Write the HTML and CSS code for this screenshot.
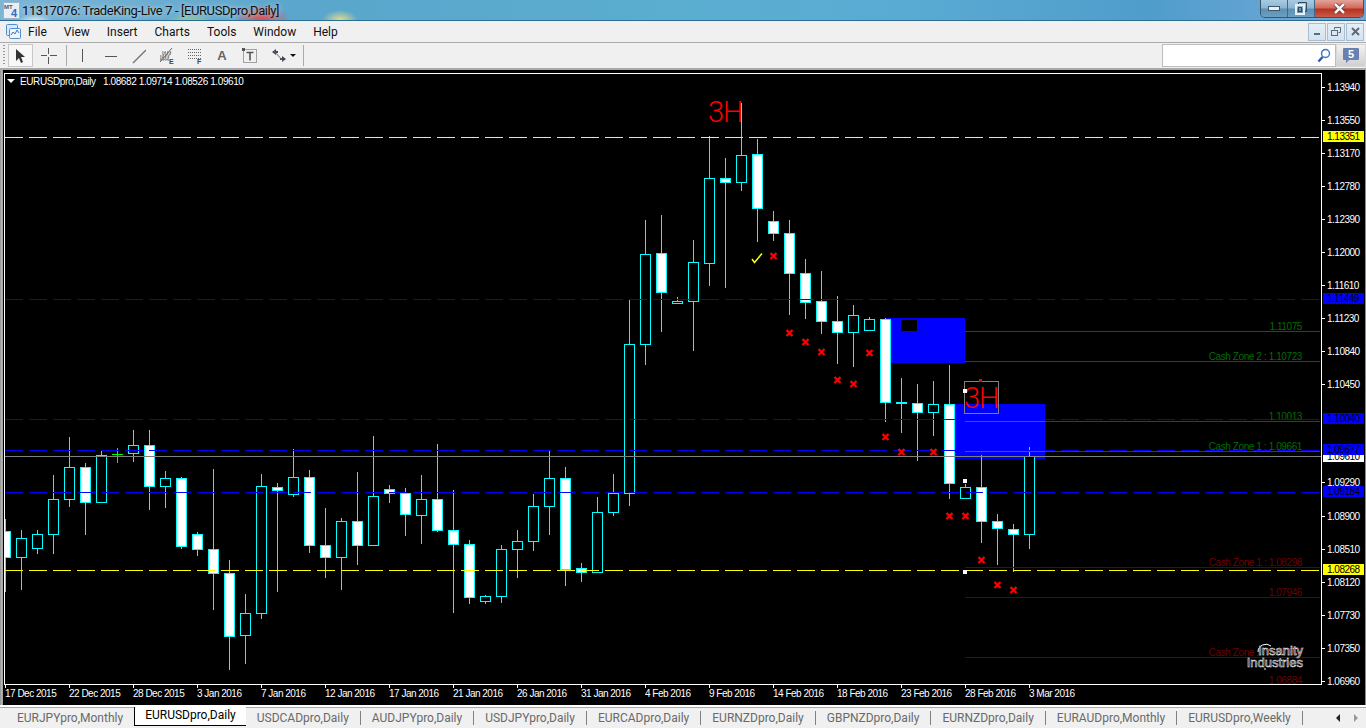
FILE: index.html
```html
<!DOCTYPE html>
<html lang="en">
<head>
<meta charset="utf-8">
<title>MetaTrader 4</title>
<link rel="stylesheet" href="styles.css">
</head>
<body>
<div class="window">
  <header class="titlebar">
    <svg class="app-icon" width="17" height="17" viewBox="0 0 17 17"><rect x="0.5" y="0.5" width="16" height="16" rx="1" fill="#e8eef4" stroke="#9fb4c8"/><text x="1" y="7" class="mt">MT</text><text x="8" y="15" class="four">4</text></svg>
    <span class="title-text">11317076: TradeKing-Live 7 - [EURUSDpro,Daily]</span>
    <div class="caption">
      <button class="cap cap-min"><svg width="12" height="5" viewBox="0 0 12 5"><rect x="0.5" y="0.5" width="11" height="4" fill="#e9eef2" stroke="#3a5870"/></svg></button>
      <button class="cap cap-max"><svg width="13" height="13" viewBox="0 0 13 13"><path d="M3.5 3.5V.5h8v9h-3" fill="none" stroke="#2c4a60"/><rect x="1" y="3" width="8" height="9" fill="none" stroke="#e9eef2" stroke-width="2"/><rect x="3.5" y="5.5" width="3" height="4" fill="none" stroke="#2c4a60"/></svg></button>
      <button class="cap cap-close"><svg width="13" height="11" viewBox="0 0 13 11"><path d="M2 1l9 9M11 1l-9 9" stroke="#4a2a2a" stroke-width="4"/><path d="M2 1l9 9M11 1l-9 9" stroke="#f4f4f4" stroke-width="2.6"/></svg></button>
    </div>
  </header>

  <nav class="menubar">
    <svg class="mdi-icon" width="17" height="17" viewBox="0 0 17 17"><rect x="1.5" y="1.5" width="11" height="11" rx="1" fill="#dbe9f6" stroke="#4f8fd0"/><rect x="4.5" y="5.5" width="11" height="10" rx="1" fill="#eef5fb" stroke="#4f8fd0"/><path d="M6 12l2-3 2 2 2-4 2 3" fill="none" stroke="#3a78b8"/></svg>
    <span class="menu-item">File</span>
    <span class="menu-item">View</span>
    <span class="menu-item">Insert</span>
    <span class="menu-item">Charts</span>
    <span class="menu-item">Tools</span>
    <span class="menu-item">Window</span>
    <span class="menu-item">Help</span>
    <div class="mdi-buttons">
      <span class="mdi-btn"><svg width="9" height="9" viewBox="0 0 9 9"><rect x="1" y="6" width="6" height="2" fill="#5a6b7c"/></svg></span>
      <span class="mdi-btn"><svg width="10" height="10" viewBox="0 0 10 10"><path d="M3.5 2.5V.5h6v5h-2" fill="none" stroke="#5a6b7c"/><rect x="0.5" y="3.5" width="6" height="5" fill="none" stroke="#5a6b7c"/></svg></span>
      <span class="mdi-btn"><svg width="9" height="9" viewBox="0 0 9 9"><path d="M1 1l7 7M8 1l-7 7" stroke="#5a6b7c" stroke-width="2"/></svg></span>
    </div>
  </nav>

  <div class="toolbar">
    <span class="grip"></span>
    <span class="tool tool-active"><svg width="14" height="16" viewBox="0 0 14 16"><path d="M2 1v12l3-3 2 5 2-1-2-5h4z" fill="#333"/></svg></span>
    <span class="tool"><svg width="16" height="16" viewBox="0 0 16 16"><path d="M0 7.500h6M9 7.500h7M7.500 0v6M7.500 9v7" stroke="#555" fill="none"/></svg></span>
    <span class="tool-sep"></span>
    <span class="tool"><svg width="16" height="16" viewBox="0 0 16 16"><path d="M8.500 1v13" stroke="#555" fill="none"/></svg></span>
    <span class="tool"><svg width="16" height="16" viewBox="0 0 16 16"><path d="M3 8.500h12" stroke="#555" fill="none"/></svg></span>
    <span class="tool"><svg width="16" height="16" viewBox="0 0 16 16"><path d="M3 15L16 2" stroke="#777" stroke-width="1.400" fill="none"/></svg></span>
    <span class="tool"><svg width="18" height="18" viewBox="0 0 18 18"><path d="M3 9h10M3 11h10M3 13h10M5 7h10M5 5h10M4 13L8 5M7 13l4-8M10 13l4-8" stroke="#666" fill="none" stroke-dasharray="1.500 1"/><path d="M3 15L15 1" stroke="#666" fill="none"/><text x="12" y="17" class="tool-letter">E</text></svg></span>
    <span class="tool"><svg width="18" height="18" viewBox="0 0 18 18"><path d="M3 2.500h13M3 5.500h13M3 8.500h13M3 11.500h13" stroke="#666" stroke-dasharray="1 1" fill="none"/><text x="12" y="17" class="tool-letter">F</text></svg></span>
    <span class="tool tool-a">A</span>
    <span class="tool"><svg width="16" height="16" viewBox="0 0 16 16"><rect x="1.500" y="1.500" width="13" height="13" fill="none" stroke="#555" stroke-dasharray="1 1"/><rect x="0" y="0" width="3" height="3" fill="#555"/><path d="M4.500 4.500h7M8 4.500v8" stroke="#555" stroke-width="1.600" fill="none"/></svg></span>
    <span class="tool"><svg width="16" height="16" viewBox="0 0 16 16"><path d="M2 4l4-3v2h2v2H6v2zM16 11l-4-3v2h-2v2h2v2z" fill="#445"/><path d="M4 3l9 10" stroke="#667" fill="none"/></svg></span>
    <span class="drop-tri"></span>
    <span class="tool-sep tool-sep-b"></span>
    <div class="search"><svg class="lens" width="14" height="15" viewBox="0 0 14 15"><circle cx="8.500" cy="5.500" r="4" fill="#fff" stroke="#3f72c0" stroke-width="1.400"/><path d="M5.500 9L1.500 13.500" stroke="#2c5aa8" stroke-width="2.400" fill="none"/></svg></div>
    <span class="bubble-btn"><svg width="18" height="18" viewBox="0 0 18 18"><path d="M2 1h14a1 1 0 0 1 1 1v10a1 1 0 0 1-1 1H7l-3 3v-3H2a1 1 0 0 1-1-1V2a1 1 0 0 1 1-1z" fill="#6a80ae"/><text x="9" y="11" class="bubble-num">5</text></svg></span>
  </div>

  <main class="chart">
    <svg class="plot" width="1362" height="635" viewBox="3 70 1362 635">
      <defs><clipPath id="area"><rect x="5" y="74" width="1316" height="611"/></clipPath></defs>
      <rect x="3" y="70" width="1362" height="635" fill="#000"/>

      <g clip-path="url(#area)">
        <rect class="zone" x="885" y="318" width="80" height="45"/>
        <rect class="zone" x="949" y="404" width="96" height="55"/>
        <rect x="901" y="320" width="16" height="11" fill="#000"/>

        <path class="wick" d="M5.500 519V592M21.500 530V590M37.500 530V554M53.500 475V554M69.500 437V507M85.500 463V535M101.500 451V502M133.500 430V462M149.500 430V510M165.500 471V508M181.500 477V549M197.500 532V556M213.500 469V610M229.500 560V670M245.500 594V664M261.500 474V619M277.500 483V592M293.500 449V497M309.500 470V553M325.500 508V578M341.500 518V590M357.500 472V565M373.500 436V496M389.500 485V503M405.500 488V536M421.500 475V544M437.500 444V532M453.500 490V613M469.500 540V604M485.500 595V604M501.500 545V603M517.500 530V578M533.500 494V551M549.500 450V535M565.500 467V586M581.500 563V582M597.500 497V573M613.500 474V516M629.500 300V506M645.500 220V365M661.500 215V332M677.500 297V303M693.500 240V351M709.500 136V286M725.500 158V288M741.500 103V191M757.500 139V242M773.500 211V241M789.500 220V315M805.500 259V319M821.500 271V334M837.500 296V364M853.500 305V367M869.500 317V319M885.500 318V422M901.500 378V433M917.500 384V461M933.500 381V436M949.500 365V499M965.500 484V499M981.500 455V543M997.500 514V565M1013.500 524V572M1029.500 447V549"/>

        <g class="hollow">
          <rect x="16.500" y="538.500" width="10" height="19"/>
          <rect x="32.500" y="534.500" width="10" height="14"/>
          <rect x="48.500" y="499.500" width="10" height="35"/>
          <rect x="64.500" y="467.500" width="10" height="32"/>
          <rect x="96.500" y="455.500" width="10" height="47"/>
          <rect x="128.500" y="445.500" width="10" height="8"/>
          <rect x="160.500" y="478.500" width="10" height="8"/>
          <rect x="240.500" y="613.500" width="10" height="22"/>
          <rect x="256.500" y="486.500" width="10" height="127"/>
          <rect x="288.500" y="477.500" width="10" height="17"/>
          <rect x="336.500" y="521.500" width="10" height="36"/>
          <rect x="368.500" y="496.500" width="10" height="49"/>
          <rect x="416.500" y="499.500" width="10" height="16"/>
          <rect x="480.500" y="596.500" width="10" height="5"/>
          <rect x="496.500" y="549.500" width="10" height="47"/>
          <rect x="512.500" y="541.500" width="10" height="8"/>
          <rect x="528.500" y="506.500" width="10" height="35"/>
          <rect x="544.500" y="478.500" width="10" height="28"/>
          <rect x="592.500" y="512.500" width="10" height="60"/>
          <rect x="608.500" y="493.500" width="10" height="19"/>
          <rect x="624.500" y="344.500" width="10" height="149"/>
          <rect x="640.500" y="254.500" width="10" height="90"/>
          <rect x="672.500" y="301.500" width="10" height="2"/>
          <rect x="688.500" y="262.500" width="10" height="39"/>
          <rect x="704.500" y="178.500" width="10" height="85"/>
          <rect x="736.500" y="155.500" width="10" height="27"/>
          <rect x="848.500" y="315.500" width="10" height="17"/>
          <rect x="864.500" y="319.500" width="10" height="11"/>
          <rect x="928.500" y="404.500" width="10" height="8"/>
          <rect x="960.500" y="487.500" width="10" height="11"/>
          <rect x="1024.500" y="456.500" width="10" height="78"/>
        </g>
        <g class="filled">
          <rect x="0.500" y="531.500" width="10" height="26"/>
          <rect x="80.500" y="467.500" width="10" height="35"/>
          <rect x="144.500" y="445.500" width="10" height="41"/>
          <rect x="176.500" y="478.500" width="10" height="68"/>
          <rect x="192.500" y="534.500" width="10" height="15"/>
          <rect x="208.500" y="549.500" width="10" height="24"/>
          <rect x="224.500" y="573.500" width="10" height="63"/>
          <rect x="272.500" y="487.500" width="10" height="3"/>
          <rect x="304.500" y="477.500" width="10" height="68"/>
          <rect x="320.500" y="545.500" width="10" height="12"/>
          <rect x="352.500" y="521.500" width="10" height="24"/>
          <rect x="384.500" y="489.500" width="10" height="4"/>
          <rect x="400.500" y="493.500" width="10" height="21"/>
          <rect x="432.500" y="499.500" width="10" height="31"/>
          <rect x="448.500" y="530.500" width="10" height="14"/>
          <rect x="464.500" y="544.500" width="10" height="53"/>
          <rect x="560.500" y="478.500" width="10" height="91"/>
          <rect x="576.500" y="568.500" width="10" height="4"/>
          <rect x="656.500" y="253.500" width="10" height="39"/>
          <rect x="720.500" y="178.500" width="10" height="4"/>
          <rect x="752.500" y="154.500" width="10" height="54"/>
          <rect x="768.500" y="221.500" width="10" height="12"/>
          <rect x="784.500" y="233.500" width="10" height="40"/>
          <rect x="800.500" y="273.500" width="10" height="29"/>
          <rect x="816.500" y="301.500" width="10" height="20"/>
          <rect x="832.500" y="321.500" width="10" height="11"/>
          <rect x="880.500" y="319.500" width="10" height="83"/>
          <rect x="896.500" y="402.500" width="10" height="1"/>
          <rect x="912.500" y="403.500" width="10" height="9"/>
          <rect x="944.500" y="404.500" width="10" height="79"/>
          <rect x="976.500" y="487.500" width="10" height="34"/>
          <rect x="992.500" y="521.500" width="10" height="7"/>
          <rect x="1008.500" y="529.500" width="10" height="5"/>
        </g>
        <path class="doji" d="M117.500 448V463M112 454.500H123"/>

        <path class="trend green" d="M965 331.500H1320M965 361.500H1320M1045 421.500H1320M1045 451.500H1320"/>
        <path class="trend xor" d="M965 421.500H1045M965 451.500H1045"/>
        <path class="trend red-line" d="M965 567.500H1320M965 597.500H1320M965 657.500H1320"/>

        <text class="lvl lvl-g" x="1302" y="330">1.11075</text>
        <text class="lvl lvl-g" x="1302" y="360">Cash Zone 2 : 1.10723</text>
        <text class="lvl lvl-g" x="1302" y="420">1.10013</text>
        <text class="lvl lvl-g" x="1302" y="450">Cash Zone 1 : 1.09661</text>
        <text class="lvl lvl-r" x="1302" y="566">Cash Zone 1 : 1.08298</text>
        <text class="lvl lvl-r" x="1302" y="596">1.07946</text>
        <text class="lvl lvl-r" x="1302" y="656">Cash Zone 2 : 1.07250</text>
        <text class="lvl lvl-r" x="1302" y="684">1.06884</text>

        <path class="dash dash-y" d="M5 137.500H1321M5 570.500H1321"/>
        <path class="dash dash-b" d="M5 299.500H1321M5 419.500H1321M5 450.500H1321M5 492.500H1321"/>
        <path class="gray-line" d="M5 456.500H1321"/>

        <g class="crosses" transform="translate(0.500 0)">
          <path d="M770 253l6 6M776 253l-6 6"/>
          <path d="M786 330l6 6M792 330l-6 6"/>
          <path d="M802 339l6 6M808 339l-6 6"/>
          <path d="M818 349l6 6M824 349l-6 6"/>
          <path d="M834 377l6 6M840 377l-6 6"/>
          <path d="M850 381l6 6M856 381l-6 6"/>
          <path d="M866 350l6 6M872 350l-6 6"/>
          <path d="M882 434l6 6M888 434l-6 6"/>
          <path d="M898 449l6 6M904 449l-6 6"/>
          <path d="M930 449l6 6M936 449l-6 6"/>
          <path d="M946 513l6 6M952 513l-6 6"/>
          <path d="M962 513l6 6M968 513l-6 6"/>
          <path d="M978 557l6 6M984 557l-6 6"/>
          <path d="M994 582l6 6M1000 582l-6 6"/>
          <path d="M1010 587l6 6M1016 587l-6 6"/>
        </g>
        <path class="check" d="M752 259l2.500 3.500 7.500-9"/>

        <text class="big3h" x="708" y="122">3H</text>
        <rect class="select" x="964.500" y="381.500" width="34" height="32"/>
        <text class="big3h" x="964" y="408">3H</text>
        <rect class="anchor" x="963" y="389" width="4" height="4"/>
        <rect x="979" y="379" width="3" height="3" fill="#f00"/>
        <rect class="anchor" x="963" y="479" width="4" height="4"/>
        <rect class="anchor" x="963" y="570" width="4" height="4"/>

        <path class="logo-arc" d="M1258 652A8 8 0 0 1 1271 646M1265 668v2"/>
        <text class="logo" x="1303" y="655">Insanity</text>
        <text class="logo" x="1303" y="667">Industries</text>
      </g>

      <rect class="frame" x="4.500" y="73.500" width="1317" height="611"/>

      <g class="ticks">
        <path d="M1322 87.500h3M1322 120.500h3M1322 153.500h3M1322 186.500h3M1322 219.500h3M1322 252.500h3M1322 285.500h3M1322 318.500h3M1322 351.500h3M1322 384.500h3M1322 482.500h3M1322 516.500h3M1322 549.500h3M1322 582.500h3M1322 615.500h3M1322 648.500h3M1322 681.500h3"/>
        <path d="M5.500 685v3M69.500 685v3M133.500 685v3M197.500 685v3M261.500 685v3M325.500 685v3M389.500 685v3M453.500 685v3M517.500 685v3M581.500 685v3M645.500 685v3M709.500 685v3M773.500 685v3M837.500 685v3M901.500 685v3M965.500 685v3M1029.500 685v3"/>
      </g>

      <g class="axis">
        <text x="1327" y="91">1.13940</text>
        <text x="1327" y="124">1.13550</text>
        <text x="1327" y="157">1.13170</text>
        <text x="1327" y="190">1.12780</text>
        <text x="1327" y="223">1.12390</text>
        <text x="1327" y="256">1.12000</text>
        <text x="1327" y="289">1.11610</text>
        <text x="1327" y="322">1.11230</text>
        <text x="1327" y="355">1.10840</text>
        <text x="1327" y="388">1.10450</text>
        <text x="1327" y="486">1.09290</text>
        <text x="1327" y="520">1.08900</text>
        <text x="1327" y="553">1.08510</text>
        <text x="1327" y="586">1.08120</text>
        <text x="1327" y="619">1.07730</text>
        <text x="1327" y="652">1.07350</text>
        <text x="1327" y="685">1.06960</text>

        <text x="5" y="697">17 Dec 2015</text>
        <text x="69" y="697">22 Dec 2015</text>
        <text x="133" y="697">28 Dec 2015</text>
        <text x="197" y="697">3 Jan 2016</text>
        <text x="261" y="697">7 Jan 2016</text>
        <text x="325" y="697">12 Jan 2016</text>
        <text x="389" y="697">17 Jan 2016</text>
        <text x="453" y="697">21 Jan 2016</text>
        <text x="517" y="697">26 Jan 2016</text>
        <text x="581" y="697">31 Jan 2016</text>
        <text x="645" y="697">4 Feb 2016</text>
        <text x="709" y="697">9 Feb 2016</text>
        <text x="773" y="697">14 Feb 2016</text>
        <text x="837" y="697">18 Feb 2016</text>
        <text x="901" y="697">23 Feb 2016</text>
        <text x="965" y="697">28 Feb 2016</text>
        <text x="1029" y="697">3 Mar 2016</text>
      </g>

      <rect class="tag-white" x="1323" y="451" width="41" height="11"/>
      <text class="tag-text" x="1327" y="460">1.09610</text>
      <rect class="tag-yellow" x="1323" y="131" width="41" height="11"/>
      <text class="tag-text" x="1327" y="140">1.13351</text>
      <rect class="tag-blue" x="1323" y="293" width="41" height="11"/>
      <text class="tag-text" x="1327" y="302">1.11449</text>
      <rect class="tag-blue" x="1323" y="413" width="41" height="11"/>
      <text class="tag-text" x="1327" y="422">1.10040</text>
      <rect class="tag-blue" x="1323" y="444" width="41" height="11"/>
      <text class="tag-text" x="1327" y="453">1.09677</text>
      <rect class="tag-blue" x="1323" y="486" width="41" height="11"/>
      <text class="tag-text" x="1327" y="495">1.09184</text>
      <rect class="tag-yellow" x="1323" y="564" width="41" height="11"/>
      <text class="tag-text" x="1327" y="573">1.08268</text>

      <path class="corner-tri" d="M7 79h8l-4 4z"/>
      <text class="chart-head" x="20" y="85">EURUSDpro,Daily</text>
      <text class="chart-head" x="103" y="85">1.08682 1.09714 1.08526 1.09610</text>
    </svg>
  </main>

  <footer class="tabs">
    <span class="tab">EURJPYpro,Monthly</span>
    <span class="tab tab-active">EURUSDpro,Daily</span>
    <span class="tab">USDCADpro,Daily</span>
    <span class="tab">AUDJPYpro,Daily</span>
    <span class="tab">USDJPYpro,Daily</span>
    <span class="tab">EURCADpro,Daily</span>
    <span class="tab">EURNZDpro,Daily</span>
    <span class="tab">GBPNZDpro,Daily</span>
    <span class="tab">EURNZDpro,Daily</span>
    <span class="tab">EURAUDpro,Monthly</span>
    <span class="tab">EURUSDpro,Weekly</span>
    <div class="tab-arrows"><span class="arrow-l"></span><span class="arrow-r"></span></div>
  </footer>
</div>
</body>
</html>
```

FILE: styles.css
```css
* { box-sizing: border-box; }
html, body { margin: 0; padding: 0; height: 100%; overflow: hidden; }
body { font-family: Roboto, "Noto Sans", sans-serif; background: #f0f0f0; }
.window { width: 1366px; height: 728px; display: flex; flex-direction: column; }

.titlebar {
  height: 21px; flex: none; display: flex; align-items: center; padding-left: 3px;
  border-bottom: 1px solid #2b6d92;
  background:
    radial-gradient(ellipse 28px 14px at 262px 18px, rgba(225,70,70,.95), rgba(225,70,70,0) 100%),
    radial-gradient(ellipse 18px 10px at 340px 20px, rgba(240,225,130,.9), rgba(240,225,130,0) 100%),
    radial-gradient(ellipse 24px 9px at 190px 22px, rgba(170,215,120,.8), rgba(170,215,120,0) 100%),
    radial-gradient(ellipse 18px 8px at 35px 22px, rgba(255,255,255,.9), rgba(255,255,255,0) 100%),
    linear-gradient(90deg, #7db5d6 0, #5aa6cc 300px, #5aaed0 700px, #5aabd4 900px, #4f9dcb 1150px, #6aa6d6 1300px, #6aa6d6 100%);
}
.app-icon { flex: none; }
.mt { font: bold 6px "Liberation Sans", sans-serif; fill: #4a5a6a; }
.four { font: bold 11px "Liberation Sans", sans-serif; fill: #2a6fb8; }
.title-text {
  margin-left: 2px; font-size: 13px; letter-spacing: -0.4px; color: #101010; white-space: nowrap;
  text-shadow: 0 0 5px rgba(255,255,255,.75);
}
.caption { margin-left: auto; margin-right: 2px; display: flex; align-self: flex-start; height: 18px; border: 1px solid #33566e; border-top: 0; border-radius: 0 0 5px 5px; overflow: hidden; }
.cap { border: 0; padding: 0; margin: 0; height: 100%; display: flex; align-items: center; justify-content: center; }
.cap-min, .cap-max { width: 27px; background: linear-gradient(#a8cbe2 0, #8db5d2 45%, #5e90b4 55%, #6d9fc2 100%); border-right: 1px solid #3f6a86; }
.cap-close { width: 48px; background: linear-gradient(#e3a49a 0, #d46a5c 45%, #b83222 55%, #c95a48 100%); }

.menubar { height: 21px; flex: none; display: flex; align-items: center; background: #f0f0f0; padding-left: 5px; position: relative; }
.mdi-icon { flex: none; margin-right: 0; }
.menu-item { padding: 0 8.5px; font-size: 12px; color: #111; white-space: nowrap; }
.menu-item:first-of-type { padding-left: 6px; }
.mdi-buttons { margin-left: auto; margin-right: 2px; display: flex; gap: 1px; }
.mdi-btn { width: 18px; height: 18px; display: flex; align-items: center; justify-content: center; border: 1px solid #a9bdd0; background: linear-gradient(#e6eef6, #d4e3f2); }

.toolbar { height: 28px; flex: none; display: flex; align-items: center; background: #f0f0f0; border-top: 1px solid #aaa; border-bottom: 2px solid #a8a8a8; padding-left: 3px; }
.grip { width: 2px; height: 21px; margin-right: 3px; background: repeating-linear-gradient(#999 0 1px, transparent 1px 3px); }
.tool { width: 28px; height: 23px; display: flex; align-items: center; justify-content: center; flex: none; }
.tool-active { width: 25px; background: #f8f8f8; border: 1px solid #c8c8c8; margin-right: 2px; }
.tool-sep { width: 1px; height: 21px; background: #aaa; margin: 0 1px 0 3px; flex: none; }
.tool-sep-b { margin-left: 7px; }
.tool-a { font: bold 13px "Liberation Sans", sans-serif; color: #666; }
.tool-letter { font: bold 7px "Liberation Sans", sans-serif; fill: #444; }
.drop-tri { width: 0; height: 0; border-left: 3px solid transparent; border-right: 3px solid transparent; border-top: 3px solid #111; margin-left: -2px; flex: none; }
.search { margin-left: auto; width: 174px; height: 23px; background: #fff; border: 1px solid #bdbdbd; display: flex; align-items: center; justify-content: flex-end; padding-right: 4px; }
.bubble-btn { width: 30px; height: 23px; display: flex; align-items: center; justify-content: center; background: linear-gradient(#f2f2f2, #d0d0d0); border: 1px solid #d8d8d8; flex: none; }
.bubble-num { font: bold 11px "Liberation Sans", sans-serif; fill: #fff; text-anchor: middle; }

.chart { height: 635px; flex: none; padding-left: 3px; padding-right: 1px; background: linear-gradient(90deg, #8f8f8f 0, #bdbdbd 2px, #8f8f8f 3px); position: relative; }
.plot { display: block; background: #000; }
.plot text { font-family: "Liberation Sans", sans-serif; font-size: 10px; }
.zone { fill: #0000ff; }
.wick { stroke: #00ffff; fill: none; shape-rendering: crispEdges; }
.hollow rect { fill: #000; stroke: #00ffff; shape-rendering: crispEdges; }
.filled rect { fill: #fff; stroke: #00ffff; shape-rendering: crispEdges; }
.doji { stroke: #00ff00; fill: none; shape-rendering: crispEdges; }
.trend { fill: none; shape-rendering: crispEdges; }
.green { stroke: #006400; }
.xor { stroke: #0064ff; }
.red-line { stroke: #640000; }
.plot .lvl { text-anchor: end; letter-spacing: -0.4px; }
.plot .lvl-g { fill: #006e00; }
.plot .lvl-r { fill: #6e0000; }
.dash { fill: none; stroke-dasharray: 18 6; shape-rendering: crispEdges; }
.dash-y { stroke: #ffff00; }
.dash-b { stroke: #0000ff; }
.gray-line { stroke: #808080; fill: none; shape-rendering: crispEdges; }
.crosses path { stroke: #ff0000; stroke-width: 2.4; fill: none; }
.check { stroke: #ffff00; stroke-width: 1.5; fill: none; }
.plot .big3h { font-family: Roboto, "Liberation Sans", sans-serif; font-size: 29px; font-weight: 300; letter-spacing: -1px; fill: #ff0000; }
.select { fill: none; stroke: #808080; shape-rendering: crispEdges; }
.anchor { fill: #fff; }
.logo-arc { fill: none; stroke: #fff; }
.plot .logo { font-size: 13px; text-anchor: end; fill: #000; stroke: #fff; stroke-width: .5px; }
.frame { fill: none; stroke: #fff; shape-rendering: crispEdges; }
.ticks path { stroke: #fff; fill: none; shape-rendering: crispEdges; }
.plot .axis text { fill: #fff; letter-spacing: -0.5px; }
.plot .tag-text { fill: #000; letter-spacing: -0.5px; }
.tag-white { fill: #fff; }
.tag-yellow { fill: #ffff00; }
.tag-blue { fill: #0000ff; }
.corner-tri { fill: #fff; }
.plot .chart-head { fill: #fff; letter-spacing: -0.4px; }

.tabs { height: 23px; flex: none; display: flex; align-items: center; background: #f0f0f0; border-top: 2px solid #fff; padding-left: 6px; box-shadow: inset 0 1px 0 #a8a8a8; }
.tab { height: 14px; padding: 0 11px; border-right: 1px solid #808080; font-size: 12px; line-height: 14px; color: #6a6a6a; white-space: nowrap; flex: none; }
.tab:first-child, .tab:nth-child(2) { border-right: 0; }
.tab-active { height: 19px; line-height: 17px; padding: 0 10px; background: #fff; color: #000; border: 1px solid #000; border-top: 0; align-self: flex-start; }
.tab-arrows { margin-left: auto; margin-right: 8px; display: flex; gap: 14px; }
.arrow-l { width: 0; height: 0; border-top: 4px solid transparent; border-bottom: 4px solid transparent; border-right: 4px solid #222; }
.arrow-r { width: 0; height: 0; border-top: 4px solid transparent; border-bottom: 4px solid transparent; border-left: 4px solid #999; }
```
